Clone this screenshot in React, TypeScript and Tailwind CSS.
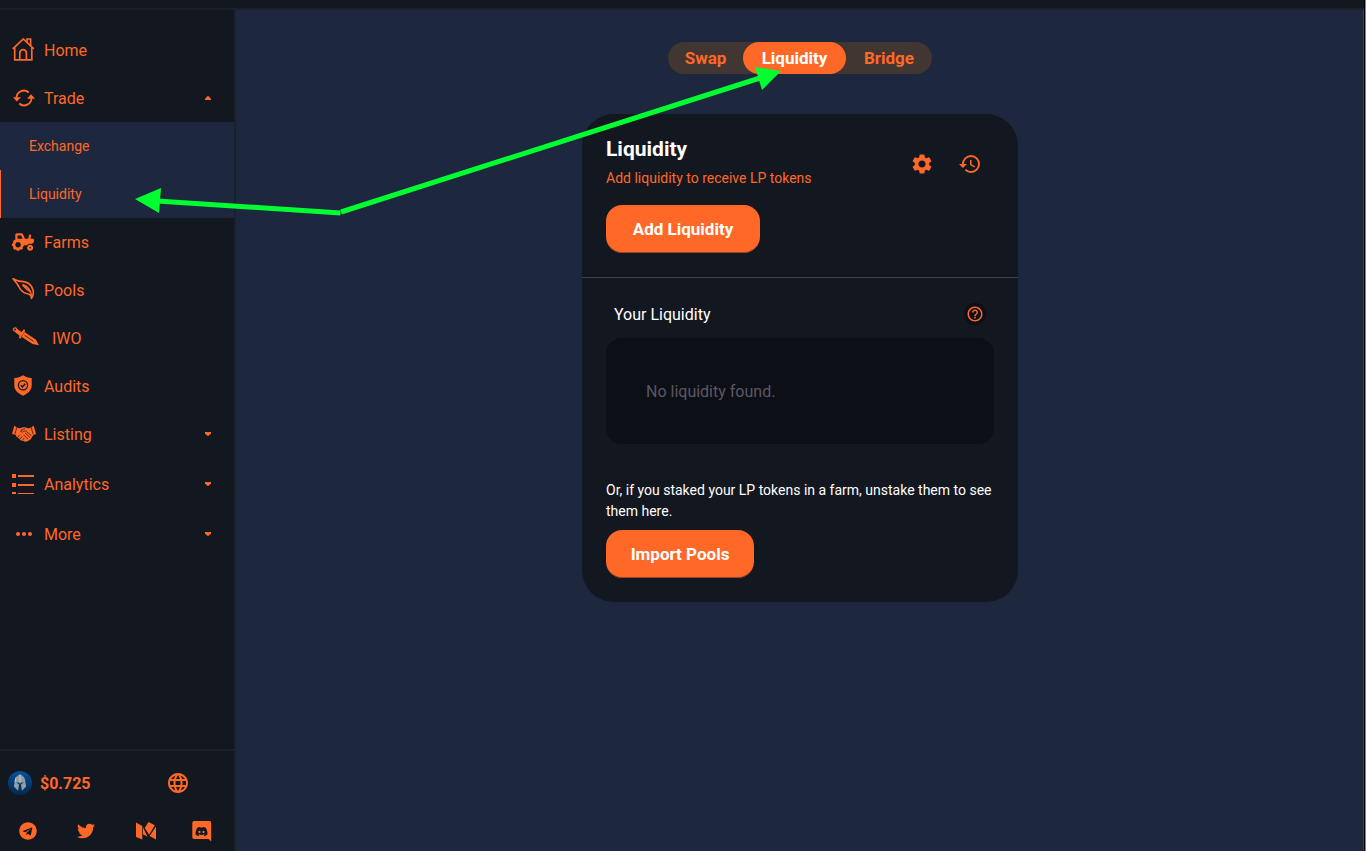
import type { ReactNode } from "react";
import { FaDiscord, FaTelegram, FaTractor, FaTwitter } from "react-icons/fa";
import { MdHelpOutline, MdHistory, MdLanguage, MdSettings } from "react-icons/md";

function HomeIcon() {
  return (
    <svg width="24" height="24" viewBox="0 0 24 24" fill="none" stroke="currentColor" strokeWidth="1.7">
      <path d="M.8 10.800 11.300 1 21.800 10.800" />
      <path d="M15 4.200V1h3.600v7" />
      <path d="M2.700 9.500v12.300h17.100V9.500" />
      <path d="M7.800 21.500v-6.500a3.300 3.300 0 0 1 6.600 0v6.500" />
    </svg>
  );
}

function TradeIcon() {
  return (
    <svg width="24" height="24" viewBox="0 0 24 24" fill="none" stroke="currentColor" strokeWidth="1.800">
      <path d="M4.500 12.500a7.400 7.400 0 0 1 12.300-6" />
      <path d="M19.500 11.500A7.400 7.400 0 0 1 7.200 17.500" />
      <path d="M1 11.300h8L4.800 15.500zM15 12.700h8l-4-4.500z" fill="currentColor" stroke="none" />
    </svg>
  );
}

function FeatherIcon() {
  return (
    <svg width="24" height="24" viewBox="0 0 24 24" fill="none" stroke="currentColor" strokeWidth="1.700" strokeLinejoin="round">
      <path d="M1 .8c3 1.700 6.400 2.700 10.200 2.900 5 .4 8.300 3.500 9.800 8.200.7 2.500.4 5.500-1.500 8.400.1-2.500-.8-3.800-3.300-4.300-4.700-1-7.200-2.800-8.900-6.500C5.800 6.100 3.600 3.800 1 .8z" />
      <path d="M10.500 6.500c4.800 1.500 8.500 5 9.300 12.600M10.500 7c3 3.500 5.500 5.500 8.500 7" strokeWidth="1.400" />
    </svg>
  );
}

function SwordIcon() {
  return (
    <svg width="28" height="24" viewBox="0 0 28 24" fill="none" stroke="currentColor">
      <circle cx="3" cy="3.500" r="1.600" strokeWidth="1.300" />
      <path d="m4 4.500 5 3.700" strokeWidth="4" />
      <path d="M12 4.500c-.5 2-3.800 3.500-3.800 7" strokeWidth="2.200" strokeLinecap="round" />
      <path d="M12.500 6 24 13.700l3 5.600-6.500-1.300L9.500 10.800z" fill="currentColor" stroke="none" />
      <path d="m12.500 9.300 9 6" stroke="#131720" strokeWidth=".8" />
    </svg>
  );
}

function ShieldIcon() {
  return (
    <svg width="24" height="24" viewBox="0 0 24 24" fill="none">
      <path d="M11 1.200c2.400 1.700 5.200 2.500 8.700 2.700v7.400c0 4.500-3 7.800-8.700 10.500-5.700-2.700-8.700-6-8.700-10.500V3.900c3.500-.2 6.300-1 8.700-2.700z" fill="currentColor" />
      <circle cx="11" cy="11.200" r="4.600" stroke="#131720" strokeWidth="1.300" />
      <path d="m8.800 11.300 1.600 1.700 2.900-3.300" stroke="#131720" strokeWidth="1.500" />
    </svg>
  );
}

function HandshakeIcon() {
  return (
    <svg width="24" height="24" viewBox="0 0 24 24" fill="currentColor">
      <path d="M2.300 3.800 5 5.600c1.700 1 3.500.5 5.200-.1 1.300-.4 2.300-.4 3.600 0 1.700.6 3.500 1.100 5.200.1l2.700-1.800L24 12l-2.500 1-1.700 2.300c-.6 1.700-2 2.900-3.600 3.400-1.500 1.300-3.300 1.500-4.700.3-2.400 0-4-1.100-5-2.900-1.500-.5-2.400-1.500-2.700-3L0 12z" />
      <g fill="none" stroke="#131720" strokeWidth=".7">
        <path d="M4.800 5.300 2.800 12.500M19.200 5.300l2 7.200" />
        <path d="M13 6.500 9 8.300c-.8 1.700.7 2.300 2.500 1.200l2-.7 6 5" />
        <path d="m13 11 5 4.500M11.500 12.800l4.500 4.400M5.500 15.500 8 12.700M7.500 17.500l2.800-3.200M10 18.800l2.200-2.700" />
      </g>
    </svg>
  );
}

function ListIcon() {
  return (
    <svg width="24" height="24" viewBox="0 0 24 24" fill="currentColor">
      <path d="M0 2h4v4H0zM0 11h4v4H0zM0 20h4v2H0zM6 3h16v2H6zM6 12h16v2H6zM6 21h16v1H6z" />
    </svg>
  );
}

function DotsIcon() {
  return (
    <svg width="24" height="24" viewBox="0 0 24 24" fill="currentColor">
      <circle cx="6" cy="12" r="2" />
      <circle cx="12" cy="12" r="2" />
      <circle cx="18" cy="12" r="2" />
    </svg>
  );
}

function MediumIcon() {
  return (
    <svg width="20" height="18" viewBox="0 0 20 18" fill="currentColor">
      <path d="M0 .5 6.300 4v13.500L.7 15.300Q0 15 0 14.200zM7 5.200l4.500 9.500L7 12.200zM12.500 0 18.800 3.200 13.200 12.700 8.700 6zM20 4.500v13l-6.400-3.400z" />
    </svg>
  );
}

function DiscordIcon() {
  return (
    <span className="grid">
      <svg className="col-start-1 row-start-1" width="20" height="22" viewBox="0 0 20 22" fill="currentColor">
        <path d="M2.300 1h14.900a2 2 0 0 1 2 2v18.500L16.500 19H2.300a2 2 0 0 1-2-2V3a2 2 0 0 1 2-2z" />
      </svg>
      <FaDiscord className="col-start-1 row-start-1 place-self-center text-[#131720]" size={13} />
    </span>
  );
}

function HelmetLogo() {
  return (
    <svg width="24" height="24" viewBox="0 0 24 24">
      <defs>
        <linearGradient id="coin" x1="0" y1="0" x2="0" y2="1">
          <stop offset="0" stopColor="#07509a" />
          <stop offset="1" stopColor="#03284f" />
        </linearGradient>
      </defs>
      <circle cx="12" cy="12" r="12" fill="url(#coin)" />
      <path d="M12 3.500c3.500 1 5.300 4 5.300 7 .2 2.500 1.200 3.800.6 5.200l-4 4-.9-6.200 3-2.300-3.300.5L12 13l-.7-1.300-3.300-.5 3 2.300-.9 6.200-4-4c-.6-1.400.4-2.700.6-5.200 0-3 1.800-6 5.300-7z" fill="#929da6" />
      <path d="M12 3.500V11M8 6.500 7 11" stroke="#c3cbd0" strokeWidth="1" />
    </svg>
  );
}

function Caret({ up = false }: { up?: boolean }) {
  return (
    <svg width="6" height="4" viewBox="0 0 6 4" fill="currentColor" aria-hidden="true">
      {up ? <path d="M0 4V2.800L2.200.3h1.600L6 2.800V4z" /> : <path d="M0 0v1.200l2.200 2.500h1.600L6 1.200V0z" />}
    </svg>
  );
}

type ItemProps = { icon: ReactNode; label: string; group?: boolean; open?: boolean; className?: string };

function NavItem({ icon, label, group, open, className = "h-12 gap-2" }: ItemProps) {
  const content = (
    <>
      {icon}
      <span className="grow pt-0.5 text-left">{label}</span>
      {group && <Caret up={open} />}
    </>
  );
  const base = "flex w-full items-center pr-[23px] pl-3";
  return (
    <li>
      {group ? (
        <button type="button" aria-expanded={!!open} className={`${base} ${className}`}>{content}</button>
      ) : (
        <a href="#" className={`${base} ${className}`}>{content}</a>
      )}
    </li>
  );
}

function Sidebar() {
  return (
    <aside className="flex w-[236px] shrink-0 flex-col border-r-2 border-[#1c202b] bg-[#131720] text-base text-[#ff6826]">
      <nav className="grow pt-4">
        <ul>
          <NavItem icon={<HomeIcon />} label="Home" />
          <NavItem icon={<TradeIcon />} label="Trade" group open />
          <li>
            <ul className="bg-[#1d273e] text-sm">
              <li><a href="#" className="flex h-12 items-center border-l border-transparent pl-7">Exchange</a></li>
              <li><a href="#" aria-current="page" className="flex h-12 items-center border-l border-[#ff6826] pl-7">Liquidity</a></li>
            </ul>
          </li>
          <NavItem icon={<FaTractor size={22} className="mr-0.5" />} label="Farms" />
          <NavItem icon={<FeatherIcon />} label="Pools" />
          <NavItem icon={<SwordIcon />} label="IWO" className="h-12 gap-3" />
          <NavItem icon={<ShieldIcon />} label="Audits" />
          <NavItem icon={<HandshakeIcon />} label="Listing" group />
          <NavItem icon={<ListIcon />} label="Analytics" group className="h-[52px] gap-2" />
          <NavItem icon={<DotsIcon />} label="More" group />
        </ul>
      </nav>
      <div className="border-t-2 border-[#1c202b] pt-2">
        <div className="flex h-12 items-center justify-between pr-11 pl-2">
          <a href="#" className="flex items-center gap-2 font-bold"><HelmetLogo /><span className="pt-0.5">$0.725</span></a>
          <button type="button" aria-label="Language"><MdLanguage size={24} /></button>
        </div>
        <div className="flex h-11 items-center justify-between pt-1 pr-[22px] pl-[19px]">
          <a href="#" aria-label="Telegram"><FaTelegram size={18} /></a>
          <a href="#" aria-label="Twitter" className="pl-1"><FaTwitter size={18} /></a>
          <a href="#" aria-label="Medium" className="pl-1"><MediumIcon /></a>
          <a href="#" aria-label="Discord"><DiscordIcon /></a>
        </div>
      </div>
    </aside>
  );
}

function LiquidityCard() {
  return (
    <section className="w-full max-w-[436px] rounded-[32px] bg-[#131720]">
      <header className="border-b border-[#43404b] p-6">
        <div className="flex items-center justify-between pr-3">
          <div>
            <h1 className="text-[21px] leading-[22px] font-bold">Liquidity</h1>
            <p className="mt-2 text-sm leading-[21px] text-[#ff6826]">Add liquidity to receive LP tokens</p>
          </div>
          <div className="flex gap-6 text-[#ff6826]">
            <button type="button" aria-label="Settings"><MdSettings size={24} /></button>
            <button type="button" aria-label="History"><MdHistory size={24} /></button>
          </div>
        </div>
        <button type="button" className="mt-4 h-12 w-[154px] rounded-2xl bg-[#ff6826] pt-0.5 text-[17px] font-bold shadow-[inset_0_-1px_0_rgba(14,14,44,0.4)]">Add Liquidity</button>
      </header>
      <div className="p-6">
        <div className="flex h-6 items-center justify-between pr-2 pl-2">
          <h2 className="pt-0.5">Your Liquidity</h2>
          <button type="button" aria-label="Help" className="rounded-full bg-[#0c0f16] p-0.5 text-[#ff6826]"><MdHelpOutline size={18} /></button>
        </div>
        <div className="mt-3 flex h-[106px] items-center rounded-2xl bg-[#0c0f16] px-10 pt-0.5 text-[#5c5764]">No liquidity found.</div>
        <p className="mt-9 text-sm leading-[21px]">Or, if you staked your LP tokens in a farm, unstake them to see them here.</p>
        <button type="button" className="mt-2 h-12 w-[148px] rounded-2xl bg-[#ff6826] pt-0.5 text-[17px] font-bold shadow-[inset_0_-1px_0_rgba(14,14,44,0.4)]">Import Pools</button>
      </div>
    </section>
  );
}

function PointerArrows() {
  return (
    <svg className="pointer-events-none absolute top-0 left-0" width="800" height="240" viewBox="0 0 800 240" aria-hidden="true">
      <g stroke="#00ff30" strokeWidth="5">
        <path d="M157 201 340.500 213" />
        <path d="M341 212 760 78" />
      </g>
      <path d="M135 199 161 188 159 213zM781 71 755 67 762 90z" fill="#00ff30" />
    </svg>
  );
}

export default function App() {
  return (
    <div className="relative flex min-h-screen flex-col bg-[#1d273e] font-[Roboto,sans-serif] text-base text-white">
      <div className="flex grow">
        <div className="flex grow flex-col">
          <div className="h-[10px] border-b-2 border-[#1c202b] bg-[#131720]" />
          <div className="flex grow">
            <Sidebar />
            <main className="flex grow flex-col items-center gap-10 px-4 pt-8 pb-8 shadow-[inset_-1px_0_0_#384052]">
              <div className="grid h-8 grid-cols-[75px_103px_86px] rounded-2xl bg-[#413632] text-[17px] font-bold text-[#ff6826]">
                <a href="#" className="flex items-center justify-center pt-0.5">Swap</a>
                <a href="#" aria-current="page" className="flex items-center justify-center rounded-2xl bg-[#ff6826] pt-0.5 text-white">Liquidity</a>
                <a href="#" className="flex items-center justify-center pt-0.5">Bridge</a>
              </div>
              <LiquidityCard />
            </main>
          </div>
        </div>
        <div className="w-0.5 border-r border-[#8a8580] bg-black" />
      </div>
      <PointerArrows />
    </div>
  );
}
